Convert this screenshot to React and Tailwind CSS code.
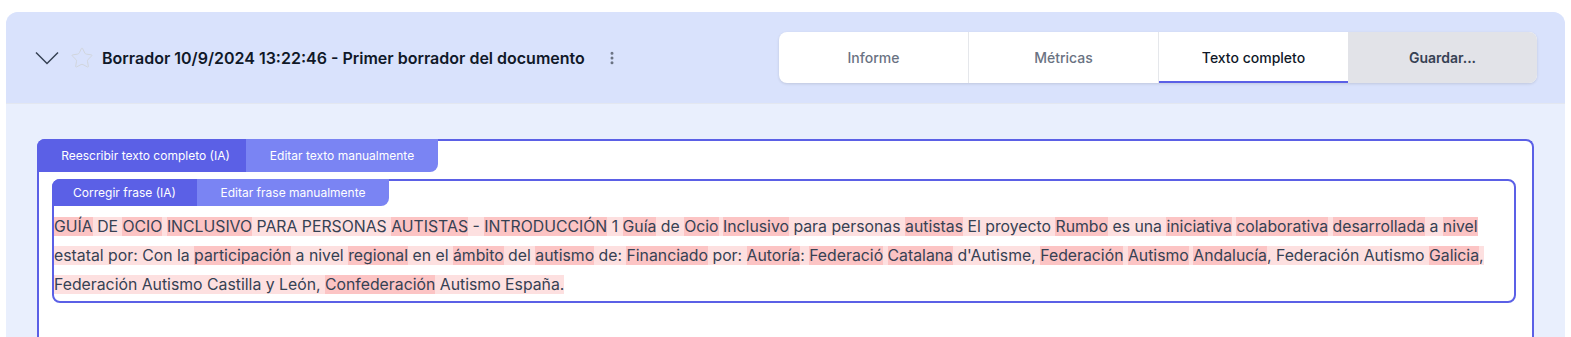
import { Star, EllipsisVertical } from "lucide-react";

const TEXT = [
  ["GUÍA", 1], [" DE "], ["OCIO", 1], [" "], ["INCLUSIVO", 1], [" PARA PERSONAS "], ["AUTISTAS", 1], [" - "],
  ["INTRODUCCIÓN", 1], [" 1 "], ["Guía", 1], [" de "], ["Ocio", 1], [" "], ["Inclusivo", 1], [" para personas "],
  ["autistas", 1], [" El proyecto "], ["Rumbo", 1], [" es una "], ["iniciativa", 1], [" "], ["colaborativa", 1], [" "],
  ["desarrollada", 1], [" a "], ["nivel", 1], [" estatal por: Con la "], ["participación", 1], [" a nivel "],
  ["regional", 1], [" en el "], ["ámbito", 1], [" del "], ["autismo", 1], [" de: "], ["Financiado", 1], [" por: "],
  ["Autoría", 1], [": "], ["Federació", 1], [" "], ["Catalana", 1], [" d'Autisme, "], ["Federación", 1], [" "],
  ["Autismo", 1], [" "], ["Andalucía", 1], [", Federación Autismo "], ["Galicia", 1],
  [", Federación Autismo Castilla y León, "], ["Confederación", 1], [" Autismo España."],
];

function HeaderTabs() {
  const tabs = ["Informe", "Métricas", "Texto completo"];
  return (
    <div className="flex h-[51px] w-[758px] overflow-hidden rounded-lg bg-white shadow-[0_1px_3px_rgba(0,0,0,0.12)]">
      {tabs.map((t, i) => (
        <div
          key={t}
          className={
            i === 2
              ? "flex flex-1 items-center justify-center border-b-2 border-[#5b60e6] pt-[2px] text-[14px] font-medium text-gray-900"
              : "flex flex-1 items-center justify-center border-r border-gray-200 text-[14px] font-medium text-gray-500"
          }
        >
          {t}
        </div>
      ))}
      <div className="flex flex-1 items-center justify-center bg-[#e2e3e8] text-[14px] font-semibold text-gray-700">
        Guardar...
      </div>
    </div>
  );
}

export default function App() {
  return (
    <div className="min-h-screen bg-white px-1.5 pt-3 font-['Inter',sans-serif]">
      <div className="overflow-hidden rounded-t-xl bg-[#e9effd]">
        {/* Header */}
        <div className="flex h-[92px] items-center justify-between border-b border-[#e3e7f0] bg-[#d9e2fc] pl-[29px] pr-7">
          <div className="flex items-center">
            <svg width="24" height="14" viewBox="0 0 24 14" className="text-gray-700">
              <polyline points="1,1.5 12,12.5 23,1.5" fill="none" stroke="currentColor" strokeWidth="1.5" />
            </svg>
            <Star size={24} strokeWidth={1} className="ml-[11px] text-gray-300" />
            <span className="ml-[8px] text-[16px] font-semibold text-gray-900">
              Borrador 10/9/2024 13:22:46 - Primer borrador del documento
            </span>
            <EllipsisVertical size={16} strokeWidth={2.5} className="ml-[19px] text-gray-500" />
          </div>
          <HeaderTabs />
        </div>

        {/* Body */}
        <div className="px-[31px] pt-[35px]">
          <div className="rounded-t-lg border-2 border-b-0 border-[#5b60e6] bg-white pb-12">
            <div className="-ml-[2px] -mt-[2px] flex h-[33px] text-[12px] text-white">
              <div className="flex w-[209px] items-center justify-center rounded-tl-lg bg-[#5b60e6] pl-2">
                Reescribir texto completo (IA)
              </div>
              <div className="flex w-[192px] items-center justify-center rounded-br-lg bg-[#7a84f3]">
                Editar texto manualmente
              </div>
            </div>
            <div className="ml-[13px] mr-4 mt-[7px] rounded-lg border-2 border-[#5b60e6]">
              <div className="-ml-[2px] -mt-[2px] flex h-[27px] text-[12px] text-white">
                <div className="flex w-[145px] items-center justify-center rounded-tl-lg bg-[#5b60e6]">
                  Corregir frase (IA)
                </div>
                <div className="flex w-[192px] items-center justify-center rounded-br-lg bg-[#7a84f3]">
                  Editar frase manualmente
                </div>
              </div>
              <p className="pb-[2px] pt-[6px] text-[15.8px] leading-[29px] text-gray-700">
                <span className="bg-[#fde0e0]">
                  {TEXT.map(([t, flag], i) =>
                    flag ? (
                      <span key={i} className="bg-[#fcc4c4]">
                        {t}
                      </span>
                    ) : (
                      <span key={i}>{t}</span>
                    )
                  )}
                </span>
              </p>
            </div>
          </div>
        </div>
      </div>
    </div>
  );
}
